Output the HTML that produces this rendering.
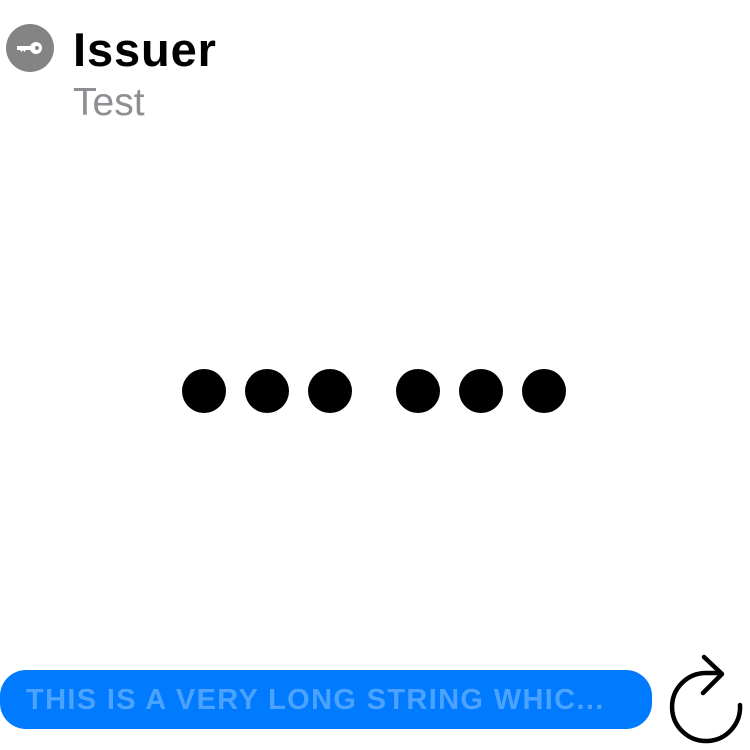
<!DOCTYPE html>
<html><head><meta charset="utf-8"><style>
body{margin:0;width:750px;height:750px;background:#fff;position:relative;overflow:hidden;font-family:"Liberation Sans",sans-serif}
.t{position:absolute;left:73px;top:22px;font-size:47px;font-weight:bold;color:#000;line-height:56px;letter-spacing:0.9px}
.s{position:absolute;left:73px;top:80px;font-size:39px;color:#8e8e93;line-height:46px}
.d{position:absolute;width:44px;height:44px;border-radius:50%;background:#000;top:369px}
.b{position:absolute;left:0;top:670px;width:652px;height:59px;border-radius:26px;background:#007aff}
.bt{position:absolute;left:26px;top:684px;font-size:29px;font-weight:bold;color:#4ca3ff;line-height:32px;letter-spacing:1.35px}
</style></head><body>
<svg style="position:absolute;left:6px;top:24px" width="48" height="48" viewBox="0 0 48 48">
<circle cx="24" cy="24" r="24" fill="#848484"/>
<circle cx="30" cy="24" r="6" fill="#fff"/>
<circle cx="31" cy="24" r="2" fill="#848484"/>
<path d="M11 22h14v4H20l-1.5 2-1.5-2-1.5 2-1.5-2H11z" fill="#fff"/>
</svg>
<div class="t">Issuer</div>
<div class="s">Test</div>
<div class="d" style="left:182px"></div>
<div class="d" style="left:245px"></div>
<div class="d" style="left:308px"></div>
<div class="d" style="left:396px"></div>
<div class="d" style="left:459px"></div>
<div class="d" style="left:522px"></div>
<div class="b"></div>
<div class="bt">THIS IS A VERY LONG STRING WHIC...</div>
<svg style="position:absolute;left:0;top:0" width="750" height="750" viewBox="0 0 750 750">
<path d="M740 705 A34 34 0 1 1 706 673 L720 673" fill="none" stroke="#000" stroke-width="4.5" stroke-linecap="round"/>
<path d="M704 657 L722 674 L703 693" fill="none" stroke="#000" stroke-width="4.5" stroke-linecap="round" stroke-linejoin="round"/>
</svg>
</body></html>
